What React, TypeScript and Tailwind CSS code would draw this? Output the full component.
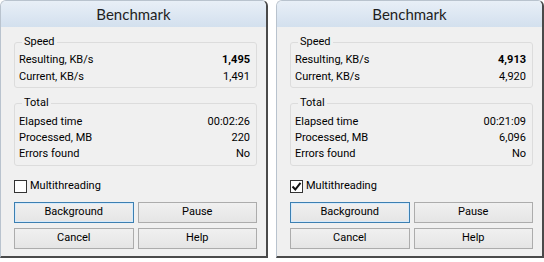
import React from "react";

type Row = { label: string; value: string; bold?: boolean };

function Group({
  title,
  rows,
  className,
  rowH,
}: {
  title: string;
  rows: Row[];
  className?: string;
  rowH: string;
}) {
  return (
    <fieldset className={"border border-[#dcdcdc] rounded-[3px] pl-[4px] pr-[6px] " + (className ?? "")}>
      <legend className="ml-[3px] px-[2px] leading-[14px]">{title}</legend>
      {rows.map((r) => (
        <div key={r.label} className={"flex justify-between items-center " + rowH}>
          <span>{r.label}</span>
          <span className={r.bold ? "font-bold" : ""}>{r.value}</span>
        </div>
      ))}
    </fieldset>
  );
}

function Btn({ children, focused }: { children: React.ReactNode; focused?: boolean }) {
  return (
    <div
      className={
        "h-[21px] flex items-center justify-center border bg-gradient-to-b from-[#f0f0f0] to-[#e5e5e5] " +
        (focused ? "border-[#3c7fb1] shadow-[inset_0_0_0_1px_#d6eafb]" : "border-[#acacac]")
      }
    >
      {children}
    </div>
  );
}

function Win({
  data,
}: {
  data: { res: string; cur: string; time: string; proc: string; checked: boolean };
}) {
  return (
    <div className="w-[268px] h-[258px] flex flex-col rounded-t-[6px] border-l border-t border-[#b9c3ce] border-r-2 border-r-[#4a4a4a] border-b-2 border-b-[#4a4a4a] overflow-hidden bg-[#f0f0f0]">
      <div
        className="h-[26px] shrink-0 flex items-center justify-center bg-gradient-to-b from-[#e8eff7] to-[#d3e0ee] text-[15px] text-[#1e1e1e]"
        style={{ fontFamily: 'Lato, "Noto Sans", sans-serif' }}
      >
        Benchmark
      </div>
      <div className="flex-1 flex flex-col pl-[13px] pr-[9px] pt-[8px]">
        <Group
          className="pt-[3px] pb-[1px]"
          rowH="h-[17px]"
          title="Speed"
          rows={[
            { label: "Resulting, KB/s", value: data.res, bold: true },
            { label: "Current, KB/s", value: data.cur },
          ]}
        />
        <Group
          className="mt-[8px] pt-[4px] pb-[3px]"
          rowH="h-[16px]"
          title="Total"
          rows={[
            { label: "Elapsed time", value: data.time },
            { label: "Processed, MB", value: data.proc },
            { label: "Errors found", value: "No" },
          ]}
        />
        <label className="mt-[13px] flex items-center gap-[3px] h-[14px]">
          <span className="w-[13px] h-[13px] border border-[#333333] bg-white flex items-center justify-center">
            {data.checked && (
              <svg width="11" height="11" viewBox="0 0 11 11">
                <path d="M1.5 5.5 L4.3 8.5 L9.5 1.8" fill="none" stroke="#111" strokeWidth="2" />
              </svg>
            )}
          </span>
          <span>Multithreading</span>
        </label>
        <div className="mt-[9px] grid grid-cols-2 gap-x-[4px] gap-y-[5px]">
          <Btn focused>Background</Btn>
          <Btn>Pause</Btn>
          <Btn>Cancel</Btn>
          <Btn>Help</Btn>
        </div>
      </div>
    </div>
  );
}

export default function App() {
  return (
    <div
      className="w-[544px] h-[262px] bg-white flex gap-[8px] text-[11px] text-black"
      style={{ fontFamily: 'Roboto, "Noto Sans", sans-serif' }}
    >
      <Win data={{ res: "1,495", cur: "1,491", time: "00:02:26", proc: "220", checked: false }} />
      <Win data={{ res: "4,913", cur: "4,920", time: "00:21:09", proc: "6,096", checked: true }} />
    </div>
  );
}
